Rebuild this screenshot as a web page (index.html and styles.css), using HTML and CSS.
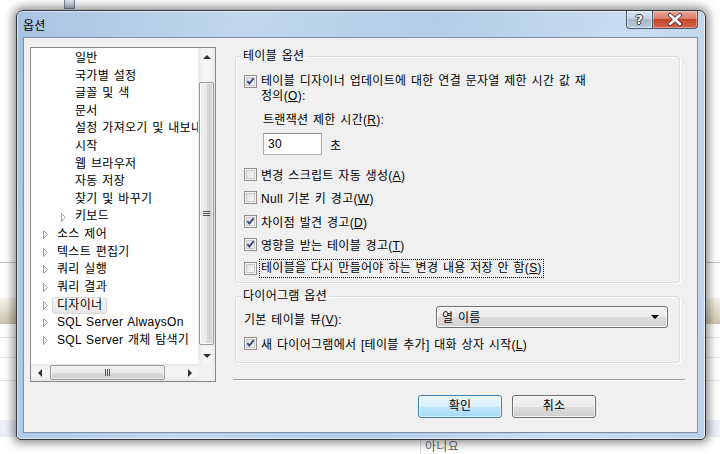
FILE: index.html
```html
<!DOCTYPE html>
<html>
<head>
    <title>옵션</title>
    <meta charset="UTF-8">
    <link rel="stylesheet" href="styles.css">
</head>
<body>
    <div class="backdrop-icon"></div>
    <div class="backdrop-cell">아니요</div>
    <div class="dialog">
        <div class="titlebar">
            <span class="title">옵션</span>
            <div class="caption-buttons">
                <div class="cap-help">?</div>
                <div class="cap-close">
                    <svg viewBox="0 0 46 18" width="46" height="18">
                        <path d="M18 4 L28 13 M28 4 L18 13" stroke="#3b3b3b" stroke-width="4.2" stroke-linecap="round"/>
                        <path d="M18 4 L28 13 M28 4 L18 13" stroke="#fff" stroke-width="2.4" stroke-linecap="round"/>
                    </svg>
                </div>
            </div>
        </div>
        <div class="client">
            <div class="tree">
                <ul class="tree-list">
                    <li class="node lvl2">일반</li>
                    <li class="node lvl2">국가별 설정</li>
                    <li class="node lvl2">글꼴 및 색</li>
                    <li class="node lvl2">문서</li>
                    <li class="node lvl2">설정 가져오기 및 내보내기</li>
                    <li class="node lvl2">시작</li>
                    <li class="node lvl2">웹 브라우저</li>
                    <li class="node lvl2">자동 저장</li>
                    <li class="node lvl2">찾기 및 바꾸기</li>
                    <li class="node lvl2 has-kids"><span class="expander"></span>키보드</li>
                    <li class="node has-kids"><span class="expander"></span>소스 제어</li>
                    <li class="node has-kids"><span class="expander"></span>텍스트 편집기</li>
                    <li class="node has-kids"><span class="expander"></span>쿼리 실행</li>
                    <li class="node has-kids"><span class="expander"></span>쿼리 결과</li>
                    <li class="node has-kids"><span class="expander"></span><span class="selected">디자이너</span></li>
                    <li class="node has-kids"><span class="expander"></span>SQL Server AlwaysOn</li>
                    <li class="node has-kids"><span class="expander"></span>SQL Server 개체 탐색기</li>
                </ul>
                <div class="vscroll">
                    <div class="sb-btn"><span class="arrow-up"></span></div>
                    <div class="sb-track">
                        <div class="vthumb"><span class="grip-h"></span></div>
                    </div>
                    <div class="sb-btn"><span class="arrow-down"></span></div>
                </div>
                <div class="hscroll">
                    <div class="sb-btn"><span class="arrow-left"></span></div>
                    <div class="sb-track">
                        <div class="hthumb"><span class="grip-v"></span></div>
                    </div>
                    <div class="sb-btn"><span class="arrow-right"></span></div>
                </div>
                <div class="sb-corner"></div>
            </div>

            <div class="pane">
                <fieldset class="group">
                    <legend>테이블 옵션</legend>
                    <div class="check-row multi">
                        <span class="checkbox checked"></span>
                        <span class="wrap-label"><span class="line">테이블 디자이너 업데이트에 대한 연결 문자열 제한 시간 값 재</span><span class="line">정의(<u>O</u>):</span></span>
                    </div>
                    <div class="timeout">
                        <div class="timeout-label">트랜잭션 제한 시간(<u>R</u>):</div>
                        <div class="timeout-input">
                            <span class="textbox">30</span>
                            <span>초</span>
                        </div>
                    </div>
                    <div class="check-list">
                        <div class="check-row"><span class="checkbox"></span><span>변경 스크립트 자동 생성(<u>A</u>)</span></div>
                        <div class="check-row"><span class="checkbox"></span><span>Null 기본 키 경고(<u>W</u>)</span></div>
                        <div class="check-row"><span class="checkbox checked"></span><span>차이점 발견 경고(<u>D</u>)</span></div>
                        <div class="check-row"><span class="checkbox checked"></span><span>영향을 받는 테이블 경고(<u>T</u>)</span></div>
                        <div class="check-row"><span class="checkbox"></span><span class="focused">테이블을 다시 만들어야 하는 변경 내용 저장 안 함(<u>S</u>)</span></div>
                    </div>
                </fieldset>

                <fieldset class="group group-diagram">
                    <legend>다이어그램 옵션</legend>
                    <div class="view-row">
                        <span>기본 테이블 뷰(<u>V</u>):</span>
                        <div class="combo">
                            <span>열 이름</span>
                            <span class="combo-arrow"></span>
                        </div>
                    </div>
                    <div class="check-row diagram-check"><span class="checkbox checked"></span><span>새 다이어그램에서 [테이블 추가] 대화 상자 시작(<u>L</u>)</span></div>
                </fieldset>

                <div class="separator"></div>

                <div class="buttons">
                    <div class="btn btn-default">확인</div>
                    <div class="btn">취소</div>
                </div>
            </div>
        </div>
    </div>
</body>
</html>
```

FILE: styles.css
```css
* {
    box-sizing: border-box;
}
body {
    margin: 0;
    width: 720px;
    height: 454px;
    overflow: hidden;
    position: relative;
    font-family: "Liberation Sans", "Noto Sans CJK KR", sans-serif;
    font-size: 12px;
    word-spacing: 1px;
    letter-spacing: 0.3px;
    color: #000;
    background:
        linear-gradient(#c4c4c4, #c4c4c4) 0 262px / 100% 1px no-repeat,
        linear-gradient(#f6f4ec, #cbc5aa) 0 298px / 100% 26px no-repeat,
        linear-gradient(#e6e6e6, #e6e6e6) 0 337px / 100% 1px no-repeat,
        linear-gradient(#e6e6e6, #e6e6e6) 0 357px / 100% 1px no-repeat,
        linear-gradient(#e6e6e6, #e6e6e6) 0 380px / 100% 1px no-repeat,
        linear-gradient(#eef0f8, #eef0f8) 0 420px / 100% 17px no-repeat,
        #fff;
}
.backdrop-icon {
    position: absolute;
    left: 64px;
    top: 0;
    width: 11px;
    height: 9px;
    border: 1px solid #7a8796;
    border-top: none;
    background: linear-gradient(#dfe6ee, #b8c4d2);
}
.backdrop-cell {
    position: absolute;
    left: 420px;
    top: 438px;
    width: 80px;
    height: 16px;
    padding-left: 4px;
    border-left: 1px solid #dcdcdc;
    color: #666;
    line-height: 18px;
}

/* window frame */
.dialog {
    position: relative;
    margin: 10px 0 0 16px;
    width: 690px;
    height: 430px;
    padding: 0 7px 6px 6px;
    display: flex;
    flex-direction: column;
    border: 1px solid #2f3439;
    border-radius: 7px 7px 5px 5px;
    background: linear-gradient(100deg, #a8c3e2 0%, #c2d7ee 30%, #b3cce8 55%, #cadcf1 80%, #bcd2ea 100%);
    box-shadow: 0 0 10px 3px rgba(0, 0, 0, 0.45), inset 0 0 0 1px rgba(255, 255, 255, 0.6);
}
.titlebar {
    height: 26px;
    display: flex;
    justify-content: space-between;
    align-items: flex-start;
}
.title {
    padding-top: 8px;
    line-height: 14px;
    font-size: 12px;
}
.caption-buttons {
    display: flex;
}
.cap-help,
.cap-close {
    height: 18px;
    border: 1px solid #4c5868;
    border-top: none;
}
.cap-help {
    width: 26px;
    border-right: none;
    border-radius: 0 0 0 4px;
    background: linear-gradient(#d9e3ef 0%, #c3d2e3 45%, #a7b8cc 50%, #b9c9dc 100%);
    box-shadow: inset 0 0 0 1px rgba(255, 255, 255, 0.5);
    color: #fff;
    font-family: "DejaVu Sans", sans-serif;
    font-weight: bold;
    font-size: 13px;
    line-height: 17px;
    text-align: center;
    text-shadow: 1px 0 0 #333, -1px 0 0 #333, 0 1px 0 #333, 0 -1px 0 #333;
}
.cap-close {
    width: 46px;
    border-radius: 0 0 4px 0;
    background: linear-gradient(#e9a99b 0%, #dc7e69 45%, #c74527 50%, #d5654a 100%);
    box-shadow: inset 0 0 0 1px rgba(255, 255, 255, 0.35);
}
.cap-close svg {
    display: block;
    margin-left: -1px;
}

/* client area */
.client {
    flex: 1;
    display: flex;
    align-items: flex-start;
    padding: 9px 12px 0 6px;
    background: #f0f0f0;
    border: 1px solid #7d8ea3;
}

/* tree view */
.tree {
    width: 186px;
    height: 335px;
    border: 1px solid #828790;
    background: #fff;
    display: grid;
    grid-template-columns: 167px 17px;
    grid-template-rows: 316px 17px;
}
.tree-list {
    margin: 0;
    padding: 2px 0 0 0;
    list-style: none;
    overflow: hidden;
}
.node {
    height: 17.6px;
    line-height: 17.6px;
    white-space: nowrap;
    padding-left: 44px;
    display: flex;
    align-items: center;
}
.node.has-kids {
    padding-left: 9px;
}
.node.lvl2.has-kids {
    padding-left: 27px;
}
.expander {
    width: 17px;
    height: 9px;
    flex: none;
    background: url("data:image/svg+xml;utf8,<svg xmlns='http://www.w3.org/2000/svg' width='17' height='9'><path d='M3.5 0.5 L7.5 4.5 L3.5 8.5 Z' fill='white' stroke='%23a0a0a0'/></svg>") no-repeat;
}
.selected {
    margin-left: -5px;
    padding: 0 4px;
    line-height: 15px;
    border: 1px solid #d9d9d9;
    border-radius: 3px;
    background: linear-gradient(#f8f8f8, #e5e5e5);
}

/* scroll bars */
.vscroll,
.hscroll {
    display: flex;
    background: linear-gradient(to right, #e8e8e8, #f5f5f5 30%, #f5f5f5 70%, #e8e8e8);
}
.vscroll {
    flex-direction: column;
}
.hscroll {
    background: linear-gradient(#e8e8e8, #f5f5f5 30%, #f5f5f5 70%, #e8e8e8);
}
.sb-btn {
    width: 17px;
    height: 17px;
    flex: none;
    display: flex;
    align-items: center;
    justify-content: center;
}
.sb-track {
    flex: 1;
    display: flex;
}
.vscroll .sb-track {
    flex-direction: column;
}
.vthumb {
    margin: 17px 1px 0 1px;
    height: 263px;
    border: 1px solid #979797;
    border-radius: 2px;
    background: linear-gradient(to right, #f3f3f3, #e8e8e8 50%, #d9d9d9 51%, #cfcfcf);
    box-shadow: inset 0 0 0 1px rgba(255, 255, 255, 0.7);
    display: flex;
    align-items: center;
    justify-content: center;
}
.hthumb {
    margin: 1px 0 1px 2px;
    width: 115px;
    border: 1px solid #979797;
    border-radius: 2px;
    background: linear-gradient(#f3f3f3, #e8e8e8 50%, #d9d9d9 51%, #cfcfcf);
    box-shadow: inset 0 0 0 1px rgba(255, 255, 255, 0.7);
    display: flex;
    align-items: center;
    justify-content: center;
}
.grip-h {
    width: 7px;
    height: 5px;
    border-top: 1px solid #555;
    border-bottom: 1px solid #555;
    background: linear-gradient(#555, #555) 0 1px / 100% 1px no-repeat;
}
.grip-v {
    width: 5px;
    height: 7px;
    border-left: 1px solid #555;
    border-right: 1px solid #555;
    background: linear-gradient(#555, #555) 1px 0 / 1px 100% no-repeat;
}
.arrow-up {
    border: 4px solid transparent;
    border-bottom: 4px solid #333;
    border-top: none;
}
.arrow-down {
    border: 4px solid transparent;
    border-top: 4px solid #333;
    border-bottom: none;
}
.arrow-left {
    border: 4px solid transparent;
    border-right: 4px solid #333;
    border-left: none;
}
.arrow-right {
    border: 4px solid transparent;
    border-left: 4px solid #333;
    border-right: none;
}
.sb-corner {
    background: #f0f0f0;
}

/* right pane */
.pane {
    margin-left: 17px;
    width: 452px;
    display: flex;
    flex-direction: column;
}
.group {
    margin: 0 0 0 2px;
    width: 445px;
    padding: 0 0 2px 8px;
    border: 1px solid #d5dfe5;
    border-radius: 3px;
    box-shadow: inset 1px 1px 0 #fff, 1px 1px 0 #fff;
}
.group legend {
    margin-left: -3px;
    padding: 0 2px;
    line-height: 19px;
}
.check-row {
    height: 23.5px;
    display: flex;
    align-items: center;
    gap: 4px;
    white-space: nowrap;
}
.check-row.multi {
    height: auto;
    margin-top: 8px;
    align-items: flex-start;
}
.check-row.multi .checkbox {
    margin-top: 1px;
}
.wrap-label {
    display: flex;
    flex-direction: column;
}
.wrap-label .line {
    height: 15px;
    line-height: 15px;
}
.checkbox {
    width: 13px;
    height: 13px;
    flex: none;
    border: 1px solid #8f8f8f;
    background: linear-gradient(135deg, #dcdcdc, #fbfbfb);
    box-shadow: inset 0 0 0 1px #f4f4f4, inset 0 0 0 2px #c9c9c9;
}
.checkbox.checked {
    background:
        url("data:image/svg+xml;utf8,<svg xmlns='http://www.w3.org/2000/svg' width='11' height='11'><path d='M2.3 5.2 L4.4 7.6 L8.7 2.2' fill='none' stroke='%23314a7e' stroke-width='1.9'/></svg>") no-repeat center,
        linear-gradient(135deg, #dcdcdc, #fbfbfb);
}
.focused {
    outline: 1px dotted #000;
    outline-offset: 1px;
    line-height: 15px;
}
u {
    text-underline-offset: 1px;
}
.timeout {
    padding-left: 19px;
}
.timeout-label {
    margin-top: 8.5px;
    line-height: 15px;
}
.timeout-input {
    margin-top: 5.5px;
    display: flex;
    align-items: center;
    gap: 8px;
}
.textbox {
    width: 59px;
    height: 22px;
    padding-left: 4px;
    line-height: 20px;
    background: #fff;
    border: 1px solid #abadb3;
    border-top-color: #8b8f99;
}
.check-list {
    margin-top: 7.25px;
}
.group-diagram {
    margin-top: 4px;
    padding-bottom: 7px;
}
.view-row {
    height: 22px;
    margin-right: 11px;
    display: flex;
    align-items: center;
    justify-content: space-between;
}
.view-row > span {
    padding-top: 3px;
}
.combo {
    width: 232px;
    height: 22px;
    padding: 0 8px 0 5px;
    display: flex;
    align-items: center;
    justify-content: space-between;
    border: 1px solid #707070;
    border-radius: 3px;
    background: linear-gradient(#f2f2f2 0%, #ebebeb 50%, #dddddd 51%, #cfcfcf 100%);
    box-shadow: inset 0 0 0 1px rgba(255, 255, 255, 0.8);
}
.combo-arrow {
    border: 4px solid transparent;
    border-top: 4px solid #000;
    border-bottom: none;
}
.diagram-check {
    margin-top: 3.5px;
}
.separator {
    margin-top: 16px;
    height: 2px;
    border-top: 1px solid #a0a0a0;
    border-bottom: 1px solid #fff;
}
.buttons {
    margin-top: 14px;
    padding-right: 89px;
    display: flex;
    justify-content: flex-end;
    gap: 10px;
}
.btn {
    width: 84px;
    height: 23px;
    line-height: 21px;
    text-align: center;
    border: 1px solid #707070;
    border-radius: 3px;
    background: linear-gradient(#f2f2f2 0%, #ebebeb 50%, #dddddd 51%, #cfcfcf 100%);
    box-shadow: inset 0 0 0 1px rgba(255, 255, 255, 0.8);
}
.btn-default {
    border-color: #3c7fb1;
    background: linear-gradient(#eaf6fd 0%, #d9f0fc 50%, #bee6fd 51%, #a7d9f5 100%);
    box-shadow: inset 0 0 0 1px rgba(255, 255, 255, 0.6);
}
```
